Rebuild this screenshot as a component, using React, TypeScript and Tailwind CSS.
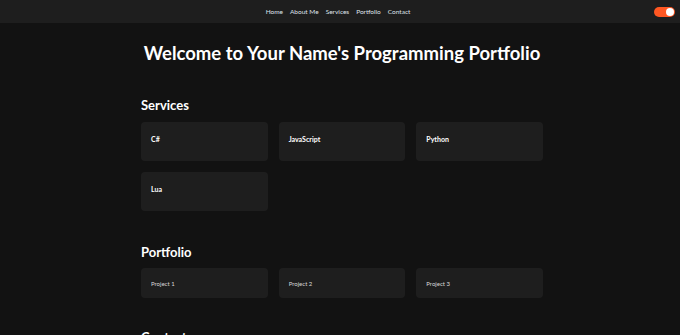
import React from "react";

const services = ["C#", "JavaScript", "Python", "Lua"];
const projects = ["Project 1", "Project 2", "Project 3"];
const links = ["Home", "About Me", "Services", "Portfolio", "Contact"];

export default function App() {
  return (
    <div
      className="min-h-screen w-full bg-[#121212] text-white"
      style={{ fontFamily: "Lato, 'Open Sans', sans-serif" }}
    >
      {/* Navbar */}
      <header className="relative h-[23px] bg-[#1e1e1e] flex items-center justify-center">
        <nav className="flex gap-[7px] text-[6.5px] text-[#dfe3ea] pr-[4px]">
          {links.map((l) => (
            <a key={l} href="#">
              {l}
            </a>
          ))}
        </nav>
        <div className="absolute right-[5px] top-[7px] w-[21px] h-[10px] rounded-full bg-[#ff5722] flex items-center justify-end pr-[1px]">
          <div className="w-[8px] h-[8px] rounded-full bg-white" />
        </div>
      </header>

      <main className="w-[406px] pl-[4px] mx-auto">
        <h1 className="text-[18.5px] font-bold text-center leading-[22px] pt-[19px] whitespace-nowrap">
          Welcome to Your Name's Programming Portfolio
        </h1>

        {/* Services */}
        <section className="mt-[33px]">
          <h2 className="text-[13px] font-bold leading-[16px]">Services</h2>
          <div className="grid grid-cols-3 gap-[11px] mt-[9px]">
            {services.map((s) => (
              <div key={s} className="h-[39px] rounded-[4px] bg-[#1e1e1e] px-[10px] pt-[13px]">
                <h3 className="text-[7px] font-bold leading-[9px]">{s}</h3>
              </div>
            ))}
          </div>
        </section>

        {/* Portfolio */}
        <section className="mt-[33px]">
          <h2 className="text-[13px] font-bold leading-[16px]">Portfolio</h2>
          <div className="grid grid-cols-3 gap-[11px] mt-[8px]">
            {projects.map((p) => (
              <div key={p} className="h-[30px] rounded-[4px] bg-[#1e1e1e] px-[10px] flex items-center">
                <p className="text-[6px] text-[#d8d8d8]">{p}</p>
              </div>
            ))}
          </div>
        </section>

        {/* Contact */}
        <section className="mt-[31px]">
          <h2 className="text-[13px] font-bold leading-[16px]">Contact</h2>
        </section>
      </main>
    </div>
  );
}
